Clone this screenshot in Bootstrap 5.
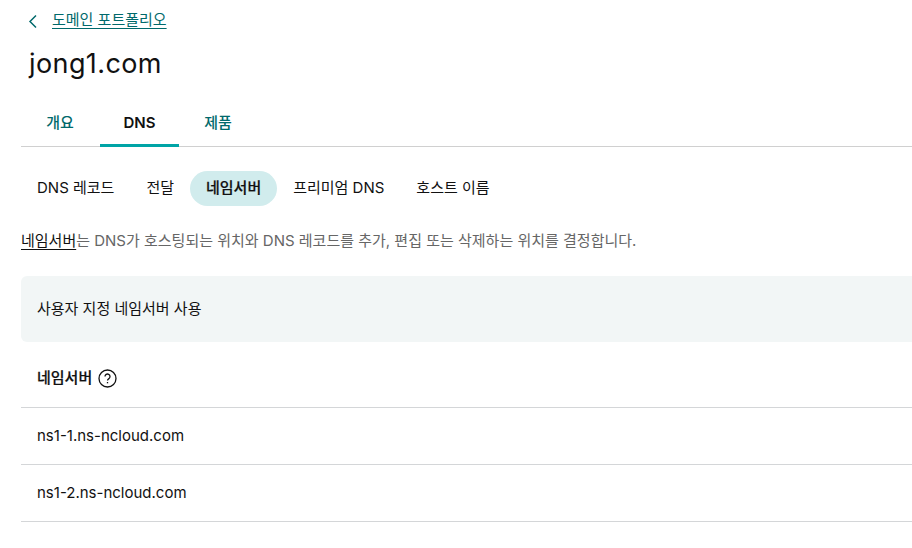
<!DOCTYPE html>
<html lang="ko">
<head>
  <meta charset="UTF-8">
  <meta name="viewport" content="width=device-width, initial-scale=1.0">
  <title>jong1.com DNS</title>
  <link href="https://cdn.jsdelivr.net/npm/bootstrap@5.3.0/dist/css/bootstrap.min.css" rel="stylesheet">
  <style>
    body {
      font-family: Inter, "Noto Sans CJK KR", sans-serif;
      font-size: 15px;
      color: #111;
      overflow: hidden;
    }
    .page-wrap { padding-left: 21px; }
    .back-row { height: 41px; padding-left: 6px; gap: 13px; }
    .back-link { color: #00696b; font-size: 15px; text-underline-offset: 3px; }
    .site-title { font-size: 27px; font-weight: 400; margin: 0; padding-left: 8px; height: 44px; line-height: 45px; letter-spacing: .4px; }
    .main-tabs { height: 62px; border-bottom: 1px solid #d0d0d0; }
    .main-tabs .nav-link {
      width: 79px; height: 62px; padding: 0 1px 10px 0; margin-bottom: -1px;
      display: flex; align-items: flex-end; justify-content: center;
      color: #00696b; font-weight: 500; font-size: 15px;
      border-bottom: 3px solid transparent;
    }
    .main-tabs .nav-link.active { color: #111; font-weight: 600; border-bottom-color: #00a4a6; padding-right: 0; }
    .sub-tabs { margin-top: 24px; height: 35px; gap: 0; }
    .sub-tabs .nav-link {
      height: 35px; padding: 0 16px; border-radius: 18px;
      display: flex; align-items: center; color: #111; font-size: 15px;
    }
    .sub-tabs .nav-link.active { background: #d1eced; color: #111; font-weight: 500; -webkit-text-stroke: .2px #111; }
    .intro { margin: 23px 0 0; height: 24px; line-height: 24px; color: #666; font-size: 15px; }
    .intro a { color: #111; text-underline-offset: 3px; }
    .custom-box { margin-top: 23px; height: 66px; background: #f2f6f6; border-radius: 6px 0 0 6px; padding-left: 16px; display: flex; align-items: center; }
    .ns-list .list-group-item { height: 57px; padding: 0 16px; display: flex; align-items: center; border: 0; border-bottom: 1px solid #d4d6d8; color: #111; font-size: 15px; background: none; }
    .ns-list .list-group-item:last-child { border-bottom-width: 1px; }
    .ns-list .ns-head { height: 66px; padding-top: 8px; font-weight: 500; gap: 6px; -webkit-text-stroke: .2px #111; }
    .ns-head svg { -webkit-text-stroke: 0; }
  </style>
</head>
<body>
  <div class="page-wrap">
    <div class="d-flex align-items-center back-row">
      <svg width="12" height="16" viewBox="0 0 12 16" fill="none" stroke="#00696b" stroke-width="1.5"><path d="M9 2.5 3 8.5l6 6"/></svg>
      <a href="#" class="back-link">도메인 포트폴리오</a>
    </div>
    <h1 class="site-title">jong1.com</h1>

    <ul class="nav main-tabs">
      <li class="nav-item"><a class="nav-link" href="#">개요</a></li>
      <li class="nav-item"><a class="nav-link active" href="#">DNS</a></li>
      <li class="nav-item"><a class="nav-link" href="#">제품</a></li>
    </ul>

    <ul class="nav sub-tabs">
      <li class="nav-item"><a class="nav-link" href="#">DNS 레코드</a></li>
      <li class="nav-item"><a class="nav-link" href="#">전달</a></li>
      <li class="nav-item"><a class="nav-link active" href="#">네임서버</a></li>
      <li class="nav-item"><a class="nav-link" href="#">프리미엄 DNS</a></li>
      <li class="nav-item"><a class="nav-link" href="#">호스트 이름</a></li>
    </ul>

    <p class="intro"><a href="#">네임서버</a>는 DNS가 호스팅되는 위치와 DNS 레코드를 추가, 편집 또는 삭제하는 위치를 결정합니다.</p>

    <div class="custom-box">사용자 지정 네임서버 사용</div>

    <ul class="list-group list-group-flush ns-list">
      <li class="list-group-item ns-head">네임서버
        <svg width="19" height="19" viewBox="0 0 19 19" fill="none" stroke="#111" stroke-width="1.3"><circle cx="9.5" cy="9.5" r="8.5"/><path d="M7 7.6a2.5 2.5 0 1 1 3.9 2c-.9.6-1.4 1-1.4 2"/><path d="M9.5 13v1.3"/></svg>
      </li>
      <li class="list-group-item">ns1-1.ns-ncloud.com</li>
      <li class="list-group-item">ns1-2.ns-ncloud.com</li>
    </ul>
  </div>
  <script src="https://cdn.jsdelivr.net/npm/bootstrap@5.3.0/dist/js/bootstrap.bundle.min.js"></script>
</body>
</html>
